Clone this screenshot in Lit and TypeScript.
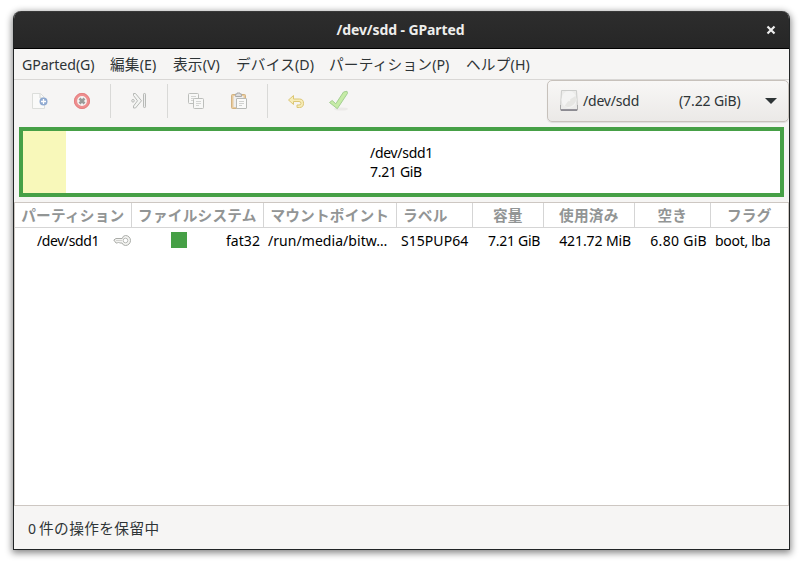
import { LitElement, html, css, svg } from "lit";
import { customElement } from "lit/decorators.js";

const menus = [
  ["", "GParted(G)", 88],
  ["編集", "(E)", 63],
  ["表示", "(V)", 63],
  ["デバイス", "(D)", 93],
  ["パーティション", "(P)", 137],
  ["ヘルプ", "(H)", 80],
] as const;

const icons = {
  add: svg`<path d="M3.500 4.500h8l4 4v11h-12z" fill="#fafaf9" stroke="#dcdedb"/><path d="M11 5v4h4" fill="none" stroke="#d5d7d4"/><circle cx="14.500" cy="12.500" r="4" fill="#90aad1"/><path d="M14.500 10v5M12 12.500h5" stroke="#fff" stroke-width="1.300"/>`,
  remove: svg`<circle cx="12" cy="12" r="6.400" fill="#f6f4f3" stroke="#ee8f8f" stroke-width="3"/><circle cx="12" cy="12" r="7.600" fill="none" stroke="#e57f80"/><path d="M9.500 9.500l5 5m0-5l-5 5" stroke="#999b99" stroke-width="2.600"/>`,
  apply: svg`<path d="M6.500 4.500h2l6 7.300-6 7.200h-2v-2l4-5.200-4-5.300z" fill="#f4f5f3" stroke="#b7b9b6"/><circle cx="6" cy="11.800" r="1.300" fill="none" stroke="#b7b9b6"/><rect x="16.500" y="4.500" width="2" height="14" rx=".7" fill="#eee" stroke="#b7b9b6"/>`,
  copy: svg`<rect x="4.500" y="4.500" width="10" height="10" rx="1" fill="#f8f8f7" stroke="#bcbebb"/><path d="M7 7.500h5M7 9.500h5M7 11.500h3" stroke="#d3d4d2"/><rect x="9.500" y="9.500" width="10" height="10" rx="1" fill="#f8f8f7" stroke="#bcbebb"/><path d="M12 12.500h5M12 14.500h5M12 16.500h3" stroke="#d3d4d2"/>`,
  paste: svg`<rect x="4.500" y="5.500" width="14" height="14" rx="1" fill="#e8cb9e" stroke="#d2b281"/><rect x="6.500" y="7" width="10" height="11" fill="#eee"/><path d="M8.500 6.500v-1.500h1.500v-1h3v1h1.500v2.500h-6z" fill="#ddd" stroke="#aaa"/><rect x="9.500" y="9.500" width="10" height="10" rx=".5" fill="#fafaf9" stroke="#b7b9b6"/><path d="M12 12.500h5M12 14.500h5M12 16.500h3" stroke="#d0d1cf"/>`,
  undo: svg`<path d="M9.500 6.500L4.500 11l5 4.500v-3h5.500q2 0 2 1.800t-2 1.700h-2v2.500h2.500q4 0 4-4.200t-4-4.300H9.500z" fill="#f7edb9" stroke="#dcc674" stroke-linejoin="round"/>`,
  check: svg`<ellipse cx="14" cy="20" rx="7" ry="1.600" fill="#ebeae8"/><path d="M2.500 13.500l2.700-2 3.600 3.300L16.500 3l3.500-.7.500 2L10.300 19.700z" fill="#c6eca6" stroke="#a3cf91" stroke-linejoin="round"/>`,
};

@customElement("app-root")
export class AppRoot extends LitElement {
  static styles = css`
    :host { display: block; box-sizing: border-box; height: 566px; padding: 11px 13px 16px; background: #fff; overflow: hidden;
      font: 14.67px/20px "Noto Sans", "Noto Sans CJK JP", sans-serif; color: #2e3436; }
    * { box-sizing: border-box; }
    .window { width: 777px; height: 539px; border: 1px solid #222526; border-top: 0; border-radius: 8px 8px 0 0; background: #f6f5f4; display: flex; flex-direction: column; box-shadow: 0 2px 7px 1px rgba(0,0,0,.48); overflow: hidden; white-space: nowrap; }
    .title { height: 38px; flex: none; margin: 0 -1px; background: linear-gradient(#2d2d2d, #262626); border-top: 1px solid #393939; border-bottom: 1px solid #000; color: #eeeeec; font-weight: 700; display: grid; grid-template-columns: 46px 1fr 48px; align-items: center; text-align: center; }
    .l { font-size: 14px; letter-spacing: -.3px; }
    .title .l { letter-spacing: -.1px; }
    .wide { letter-spacing: .05px; }
    .wider { letter-spacing: .3px; }
    .mid { letter-spacing: -.1px; }
    .tight { letter-spacing: -.4px; }
    .close { justify-self: center; margin-left: 10px; display: block; }
    .menu { height: 31px; flex: none; border-bottom: 1px solid #d9d7d5; display: flex; align-items: center; padding-left: 8px; letter-spacing: .2px; }
    .menu div { flex: none; }
    .menu .l { letter-spacing: .05px; font-size: 14.2px; }
    .menu div:first-child .l { letter-spacing: -.1px; }
    .tools { height: 47px; flex: none; display: flex; }
    .slot { display: flex; justify-content: center; height: 42px; align-items: center; flex: none; }
    .sep { width: 1px; height: 34px; margin-top: 4px; background: #d9d9d7; flex: none; }
    .combo { margin-left: auto; width: 242px; height: 42px; border: 1px solid #c7c1bb; border-radius: 5px; background: linear-gradient(#f8f7f6, #ebe9e7); display: flex; align-items: center; padding: 0 11px; box-shadow: 0 1px 1px #ddd; }
    .dev { margin-left: 4px; width: 96px; letter-spacing: -.2px; }
    .arrow { margin-left: auto; width: 12px; height: 6px; background: #2e3436; clip-path: polygon(0 0, 100% 0, 50% 100%); }
    .map { margin: 0 5px; height: 70px; flex: none; border: 4px solid #46a046; background: #fff; display: flex; color: #000; }
    .used { width: 43px; background: #f8f8ba; flex: none; }
    .info { margin-left: 304px; padding-top: 12px; line-height: 19px; }
    .table { margin-top: 5px; height: 304px; flex: none; background: #fff; border: 1px solid #cdc7c2; display: flex; flex-direction: column; }
    .row { display: grid; grid-template-columns: 117px 132px 133px 76px 71px 91px 76px 1fr; }
    .head { height: 25px; flex: none; border-bottom: 1px solid #d5d5d5; color: #929595; font-weight: 700; letter-spacing: .2px; }
    .head div { border-right: 1px solid #d5d5d5; text-align: center; line-height: 25px; padding-right: .4px; }
    .head .left { text-align: left; padding-left: 6px; }
    .head div:last-child { border: 0; }
    .body { height: 26px; color: #000; align-items: center; }
    .body > div { display: flex; align-items: center; }
    .swatch { width: 16px; height: 16px; background: #46a046; margin: -2px auto 0 39px; }
    .body .end { justify-content: flex-end; padding-right: 4px; }
    .body .key { padding-right: 1px; }
    .key .l { margin-right: 14px; }
    .fs { margin-right: 4px; }
    .start { padding-left: 4px; }
    .status { padding: 12px 14px; letter-spacing: .4px; }
  `;

  icon(name: keyof typeof icons, before = 0, width = 24) {
    return html`<div class="slot" style="width:${width}px;margin-left:${before}px"><svg width="24" height="24">${icons[name]}</svg></div>`;
  }

  render() {
    return html`<div class="window">
      <div class="title"><i></i><span class="l">/dev/sdd - GParted</span>
        <svg class="close" width="10" height="10"><path d="M1.500 1.500l7 7m0-7l-7 7" stroke="#eee" stroke-width="2.200"/></svg></div>
      <div class="menu">${menus.map(([jp, latin, w]) => html`<div style="width:${w}px">${jp}<span class="l">${latin}</span></div>`)}</div>
      <div class="tools">
        ${this.icon("add", 15)}${this.icon("remove", 17)}
        <div class="sep" style="margin-left:16px"></div>
        ${this.icon("apply", 16)}
        <div class="sep" style="margin-left:16px"></div>
        ${this.icon("copy", 16)}${this.icon("paste", 19)}
        <div class="sep" style="margin-left:16px"></div>
        ${this.icon("undo", 16)}${this.icon("check", 19)}
        <div class="combo">
          <svg width="20" height="24"><path d="M2.500 1.500h15l1 17v3h-17v-3z" fill="#ececea" stroke="#cccdcb"/><ellipse cx="10" cy="10.500" rx="7.500" ry="8.500" fill="#f4f4f3"/><path d="M10 11L16.500 7a8 8 0 01-11 10z" fill="#e6e6e3"/><circle cx="10" cy="11" r="1.300" fill="#f4f4f2"/><path d="M1.500 16v5" stroke="#aaa"/><path d="M18.500 16v5" stroke="#aaa"/><path d="M2 21h16" stroke="#77747e" stroke-width="1.500"/></svg>
          <span class="l dev">/dev/sdd</span><span class="l mid">(7.22 GiB)</span><span class="arrow"></span>
        </div>
      </div>
      <div class="map"><div class="used"></div><div class="info"><div class="l">/dev/sdd1</div><div class="l">7.21 GiB</div></div></div>
      <div class="table">
        <div class="row head"><div>パーティション</div><div>ファイルシステム</div><div>マウントポイント</div><div class="left">ラベル</div><div>容量</div><div>使用済み</div><div>空き</div><div>フラグ</div></div>
        <div class="row body">
          <div class="end key"><span class="l tight">/dev/sdd1</span>
            <svg width="18" height="14"><path d="M.8 6L3 4.500h6.200Q10 1.500 12.500 1.500a4.800 4.800 0 010 10q-2.500 0-3.500-2.500H6.500L5.500 8l-1 1H3z" fill="#f3f3f1" stroke="#aaaca8"/><circle cx="12.500" cy="6.500" r="2.300" fill="#fff" stroke="#b8bab6"/><path d="M3 6.500h6" stroke="#d3d3d0"/></svg></div>
          <div><span class="swatch"></span><span class="l fs wide">fat32</span></div>
          <div class="start"><span class="l wide">/run/media/bitw…</span></div>
          <div class="start"><span class="l wide">S15PUP64</span></div>
          <div class="end"><span class="l">7.21 GiB</span></div>
          <div class="end"><span class="l mid">421.72 MiB</span></div>
          <div class="end"><span class="l wider">6.80 GiB</span></div>
          <div class="start"><span class="l">boot, lba</span></div>
        </div>
      </div>
      <div class="status"><span class="l">0 </span>件の操作を保留中</div>
    </div>`;
  }
}
